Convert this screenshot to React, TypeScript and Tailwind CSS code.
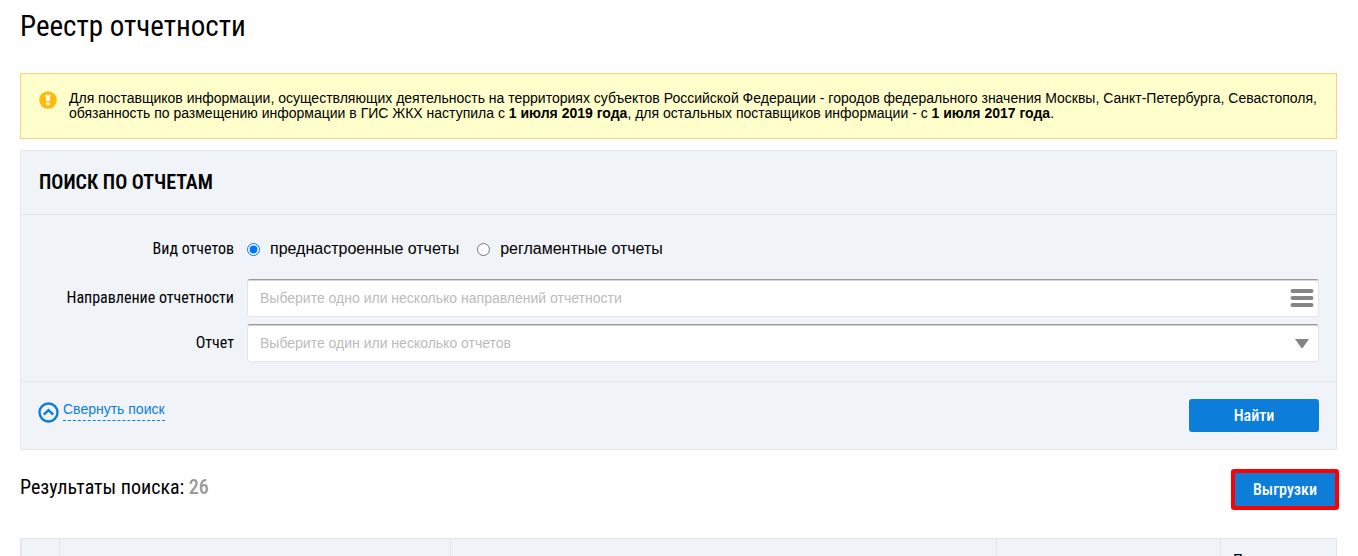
import { useState } from 'react';

const reportKinds = [
  { id: 'preset', label: 'преднастроенные отчеты' },
  { id: 'regulated', label: 'регламентные отчеты' },
];

const condensed = "font-['Roboto_Condensed','Roboto',sans-serif]";

function WarningIcon() {
  return (
    <svg viewBox="0 0 18 18" className="h-[18px] w-[18px] shrink-0" aria-hidden="true">
      <circle cx="9" cy="9" r="8.8" fill="#ffbb11" />
      <path d="M6.4 3.8h5l-.8 6.4H7.2z" fill="#ffffdd" />
      <rect x="7" y="11.4" width="3.8" height="2.8" rx="1" fill="#ffffdd" />
    </svg>
  );
}

function CollapseIcon() {
  return (
    <svg viewBox="0 0 21 21" className="mt-[3px] h-[21px] w-[21px] shrink-0" fill="none" stroke="#0c7dd9" aria-hidden="true">
      <circle cx="10.5" cy="10.5" r="9" strokeWidth="2.4" />
      <path d="M5.8 12.6l4.7-4.5 4.7 4.5" strokeWidth="2.4" />
    </svg>
  );
}

function ListIcon() {
  return (
    <svg viewBox="0 0 24 18" className="h-[18px] w-6" fill="#858585" aria-hidden="true">
      <rect x="0.5" y="0" width="23" height="4" rx="2" />
      <rect x="0.5" y="7" width="23" height="4" rx="2" />
      <rect x="0.5" y="14" width="23" height="4" rx="2" />
    </svg>
  );
}

function ArrowIcon() {
  return (
    <svg viewBox="0 0 14 9" className="h-[9px] w-3.5" fill="#858585" aria-hidden="true">
      <path d="M0 0h14L8 8.4q-1 1.2-2 0z" />
    </svg>
  );
}

interface PickerProps {
  id: string;
  label: string;
  placeholder: string;
  buttonLabel: string;
  children: React.ReactNode;
}

function Picker({ id, label, placeholder, buttonLabel, children }: PickerProps) {
  return (
    <div className="flex items-center">
      <label htmlFor={id} className={`w-[195px] shrink-0 text-right text-base ${condensed}`}>
        {label}
      </label>
      <div className="ml-[13px] flex h-[38px] flex-1 items-center rounded-[3px] border border-[#e2e6ea] border-t-[#999999] bg-white shadow-[inset_0_1px_0_#d4d4d4]">
        <input
          id={id}
          type="text"
          placeholder={placeholder}
          className="h-full min-w-0 flex-1 bg-transparent pl-3 text-sm outline-none placeholder:text-[#bbbbbb]"
        />
        <button type="button" aria-label={buttonLabel} className="flex h-full w-8 items-center justify-center">
          {children}
        </button>
      </div>
    </div>
  );
}

export default function App() {
  const [kind, setKind] = useState('preset');

  return (
    <div className="bg-white pr-[21px] pl-5 font-['Liberation_Sans',Arial,sans-serif] text-black">
      <h1 className={`pt-2 text-[29px] leading-9 ${condensed}`}>Реестр отчетности</h1>

      <div className="mt-[29px] flex gap-3 border border-[#ffcc80] bg-[#ffffcc] py-[17px] pr-4 pl-[18px]">
        <WarningIcon />
        <p className="text-sm leading-[15px]">
          Для поставщиков информации, осуществляющих деятельность на территориях субъектов Российской Федерации -
          городов федерального значения Москвы, Санкт-Петербурга, Севастополя, обязанность по размещению информации в
          ГИС ЖКХ наступила с <b>1 июля 2019 года</b>, для остальных поставщиков информации - с{' '}
          <b>1 июля 2017 года</b>.
        </p>
      </div>

      <form className="mt-[11px] border border-[#e3e7eb] bg-[#f0f3f8]" onSubmit={(e) => e.preventDefault()}>
        <h2
          className={`border-b border-[#e3e7eb] px-[18px] pt-[17px] pb-[18px] text-xl leading-7 font-semibold uppercase ${condensed}`}
        >
          Поиск по отчетам
        </h2>

        <div className="border-b border-[#e3e7eb] pt-5 pr-[17px] pb-[19px] pl-[18px]">
          <div role="radiogroup" aria-labelledby="kind-label" className="flex h-7 items-center">
            <span id="kind-label" className={`w-[195px] shrink-0 text-right text-base ${condensed}`}>
              Вид отчетов
            </span>
            <div className="ml-[13px] flex gap-[18px]">
              {reportKinds.map((item) => (
                <label key={item.id} className="flex items-center gap-2.5 text-base">
                  <input
                    type="radio"
                    name="kind"
                    checked={kind === item.id}
                    onChange={() => setKind(item.id)}
                    className="h-[13px] w-[13px]"
                  />
                  {item.label}
                </label>
              ))}
            </div>
          </div>
          <div className="mt-4 flex flex-col gap-[7px]">
            <Picker
              id="direction"
              label="Направление отчетности"
              placeholder="Выберите одно или несколько направлений отчетности"
              buttonLabel="Открыть список направлений"
            >
              <ListIcon />
            </Picker>
            <Picker
              id="report"
              label="Отчет"
              placeholder="Выберите один или несколько отчетов"
              buttonLabel="Открыть список отчетов"
            >
              <ArrowIcon />
            </Picker>
          </div>
        </div>

        <div className="flex items-start justify-between px-[17px] py-[17px]">
          <button type="button" className="flex items-start gap-1 text-sm text-[#0c7dd9]">
            <CollapseIcon />
            <span className="border-b border-dashed border-[#0c7dd9] leading-[21px]">Свернуть поиск</span>
          </button>
          <button
            type="submit"
            className={`h-[33px] w-[130px] rounded-[3px] bg-[#0c7dd9] text-base font-medium text-white ${condensed}`}
          >
            Найти
          </button>
        </div>
      </form>

      <div className="mt-[21px] flex items-start justify-between">
        <p className={`pt-1 text-xl leading-6 ${condensed}`}>
          Результаты поиска: <span className="font-medium text-[#999999]">26</span>
        </p>
        <button
          type="button"
          className={`h-[37px] w-[104px] rounded-[1px] bg-[#0c7dd9] text-base font-medium text-white outline-4 -outline-offset-2 outline-[#ff0000] ${condensed}`}
        >
          Выгрузки
        </button>
      </div>

      <table className="mt-[30px] w-full table-fixed border-separate border-spacing-0 border-x border-[#e3e7eb] bg-[#f0f4f8] text-left">
        <thead>
          <tr className="h-12 align-top">
            <th className="w-[38px] border-t border-l border-[#e3e7eb]" />
            <th className="w-[391px] border-t border-l border-[#e3e7eb]" />
            <th className="border-t border-l border-[#e3e7eb]" />
            <th className="w-[224px] border-t border-l border-[#e3e7eb]" />
            <th className={`w-[116px] border-t border-l border-[#e3e7eb] px-3 pt-2.5 text-base font-normal ${condensed}`}>
              Период
            </th>
          </tr>
        </thead>
      </table>
    </div>
  );
}
